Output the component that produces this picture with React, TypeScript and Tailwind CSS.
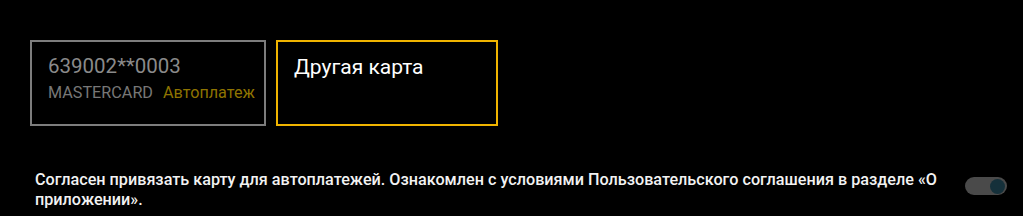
import React from "react";

export default function App() {
  return (
    <div
      className="w-full h-[216px] bg-black overflow-hidden pt-[40px] pl-[30px] pr-[16px]"
      style={{ fontFamily: "Roboto, 'Noto Sans', sans-serif" }}
    >
      <div className="flex gap-[10px]">
        <div className="w-[236px] h-[86px] border-2 border-[#7d7d7d] pl-[16px] pt-[12px]">
          <div className="text-[20.5px] leading-[24px] text-[#8a8a8a]">639002**0003</div>
          <div className="mt-[5px] text-[16.2px] leading-[20px] flex gap-[10px]">
            <span className="text-[#777777]">MASTERCARD</span>
            <span className="text-[#8f7400]">Автоплатеж</span>
          </div>
        </div>
        <div className="w-[222px] h-[86px] border-2 border-[#f0b400] pl-[16px] pt-[13px]">
          <div className="text-[21px] leading-[24px] text-white">Другая карта</div>
        </div>
      </div>
      <div className="mt-[44px] ml-[5px] flex items-start">
        <p className="flex-1 text-[16.2px] leading-[20px] font-medium text-[#f2f2f2]">
          Согласен привязать карту для автоплатежей. Ознакомлен с условиями Пользовательского соглашения в разделе «О приложении».
        </p>
        <div className="ml-[8px] mt-[7px] w-[42px] h-[18px] rounded-full bg-[#4a4a4a] flex items-center justify-end pr-[2px] shrink-0">
          <div className="w-[15px] h-[15px] rounded-full bg-[#15303a]" />
        </div>
      </div>
    </div>
  );
}
